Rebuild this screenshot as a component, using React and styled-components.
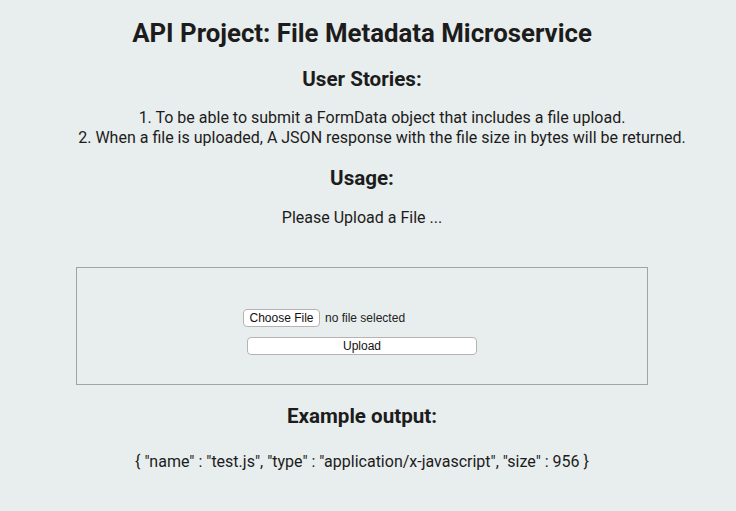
import React from "react";
import styled, { createGlobalStyle } from "styled-components";

const Global = createGlobalStyle`
  html, body { margin: 0; padding: 0; background: #e8eded; }
  body { font-family: Roboto, "Noto Sans", sans-serif; color: #1c1c1c; }
`;

const Page = styled.main`
  box-sizing: border-box;
  width: 736px;
  min-height: 511px;
  padding: 18px 12px 20px 0;
  text-align: center;
`;

const Title = styled.h1`
  margin: 0;
  font-size: 25.8px;
  line-height: 30px;
  font-weight: 700;
`;

const Heading = styled.h3`
  margin: ${(p) => p.$mt}px 0 0;
  font-size: 20.6px;
  line-height: 24px;
  font-weight: 700;
`;

const Stories = styled.ol`
  list-style: none;
  margin: 17px 0 0;
  padding: 0 0 0 40px;
  font-size: 16px;
  line-height: 20px;
`;

const Text = styled.p`
  margin: ${(p) => p.$mt}px 0 0;
  font-size: 16px;
  line-height: 20px;
`;

const UploadBox = styled.form`
  box-sizing: border-box;
  margin: 39px 76px 0;
  height: 118px;
  border: 1px solid #a3a3a3;
  padding-top: 41px;
  display: flex;
  flex-direction: column;
  align-items: center;
  gap: 10px;
`;

const FileRow = styled.div`
  width: 238px;
  display: flex;
  align-items: center;
  gap: 5px;
  font-family: "Liberation Sans", Arial, sans-serif;
  font-size: 12px;
  color: #222;
`;

const NativeButton = styled.button`
  box-sizing: border-box;
  height: 18px;
  width: ${(p) => p.$w}px;
  padding: 0;
  border: 1px solid #b4b4b4;
  border-radius: 4px;
  background: #fff;
  font-family: "Liberation Sans", Arial, sans-serif;
  font-size: 12px;
  line-height: 16px;
  color: #111;
`;

export default function App() {
  return (
    <>
      <Global />
      <Page>
        <Title>API Project: File Metadata Microservice</Title>
        <Heading $mt={19}>User Stories:</Heading>
        <Stories>
          <li>1. To be able to submit a FormData object that includes a file upload.</li>
          <li>2. When a file is uploaded, A JSON response with the file size in bytes will be returned.</li>
        </Stories>
        <Heading $mt={18}>Usage:</Heading>
        <Text $mt={18}>Please Upload a File ...</Text>
        <UploadBox onSubmit={(e) => e.preventDefault()}>
          <FileRow>
            <NativeButton type="button" $w={77}>Choose File</NativeButton>
            <span>no file selected</span>
          </FileRow>
          <NativeButton type="submit" $w={230}>Upload</NativeButton>
        </UploadBox>
        <Heading $mt={19}>Example output:</Heading>
        <Text $mt={24}>{'{ "name" : "test.js", "type" : "application/x-javascript", "size" : 956 }'}</Text>
      </Page>
    </>
  );
}
